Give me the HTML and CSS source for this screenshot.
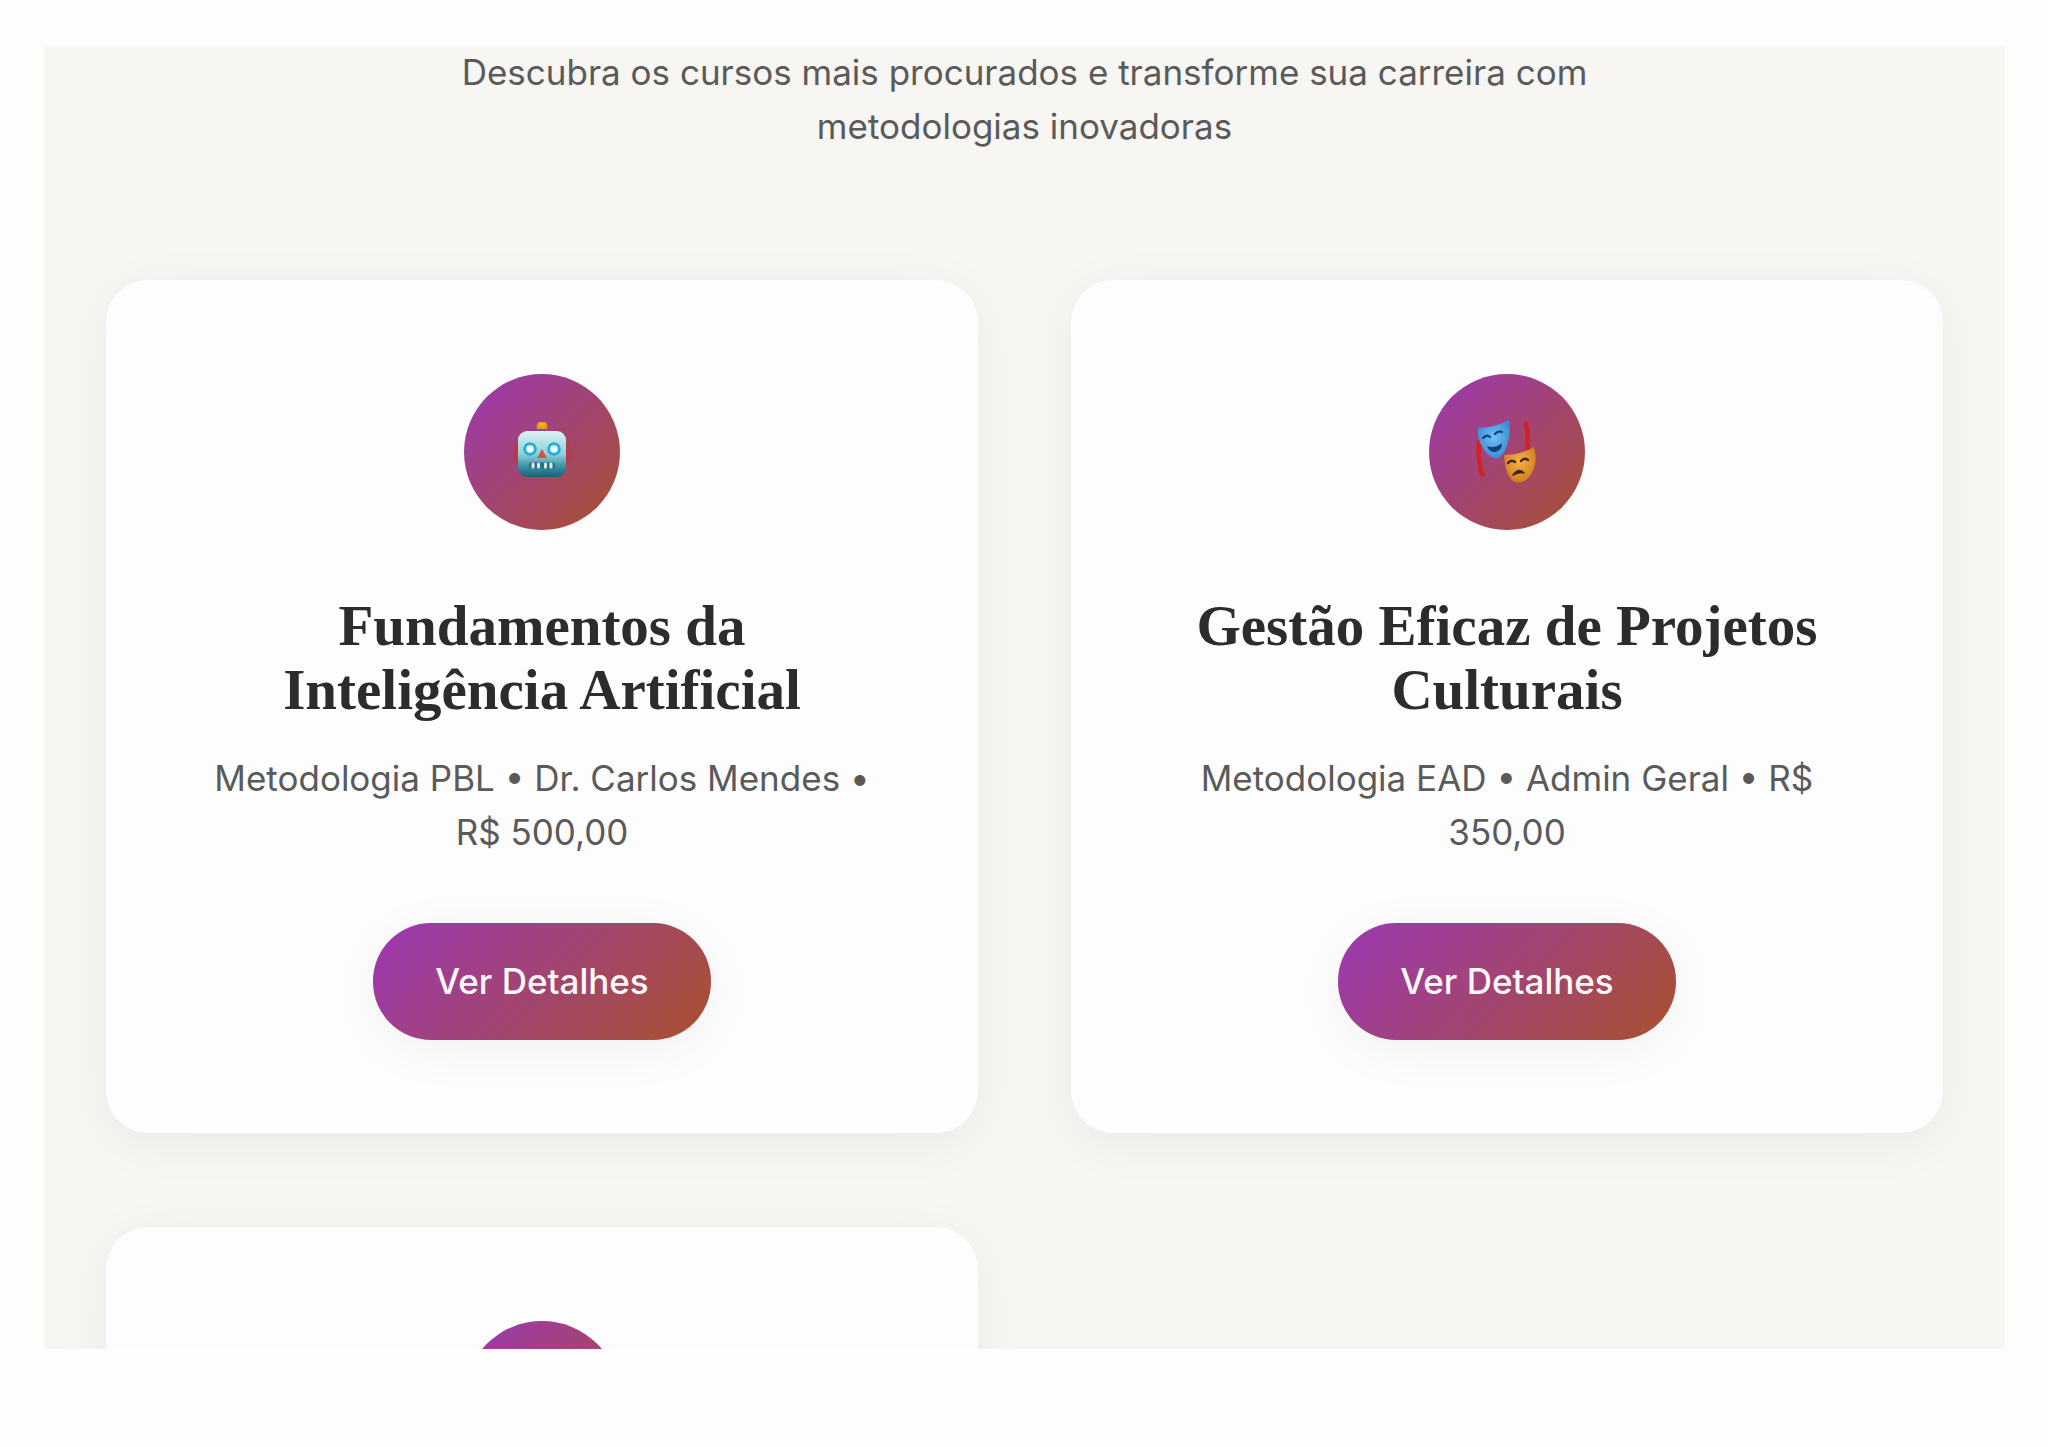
FILE: index.html
```html
<!DOCTYPE html>
<html lang="pt-BR">
<head>
<meta charset="utf-8">
<title>Cursos</title>
<link rel="stylesheet" href="styles.css">
</head>
<body>
<main class="stage">
  <p class="intro">Descubra os cursos mais procurados e transforme sua carreira com<br>metodologias inovadoras</p>
  <section class="grid">
    <article class="card">
      <div class="icon">
        <svg class="emoji" viewBox="0 0 60 60" width="60" height="60" aria-hidden="true">
          <defs>
            <linearGradient id="head" x1="0" y1="0" x2="0" y2="1"><stop offset="0" stop-color="#dcf3f6"/><stop offset=".5" stop-color="#8fd0d8"/><stop offset=".75" stop-color="#3f97a8"/><stop offset="1" stop-color="#1a6076"/></linearGradient>
            <radialGradient id="ball" cx=".5" cy=".35" r=".7"><stop offset="0" stop-color="#fbb92e"/><stop offset="1" stop-color="#e0761c"/></radialGradient>
          </defs>
          <rect x="1.5" y="22" width="7" height="19" rx="3" fill="#b23c4a"/>
          <rect x="51.5" y="22" width="7" height="19" rx="3" fill="#b23c4a"/>
          <circle cx="30" cy="4.500" r="5.500" fill="url(#ball)"/>
          <path d="M26 7h8v3h-8z" fill="#6a5a9c"/>
          <rect x="6" y="9" width="48" height="46" rx="9" fill="url(#head)"/>
          <circle cx="18" cy="27" r="6.800" fill="#22b2d2"/><circle cx="18" cy="27" r="3.800" fill="#f4fdff"/>
          <circle cx="42" cy="27" r="6.800" fill="#22b2d2"/><circle cx="42" cy="27" r="3.800" fill="#f4fdff"/>
          <path d="M30 27l5 9H25z" fill="#d8504e"/>
          <rect x="17" y="40.500" width="26" height="6" rx="2" fill="#2b6f82"/>
          <path d="M21 42v3M26.500 42v3M33.500 42v3M39 42v3" stroke="#dcecef" stroke-width="3" stroke-linecap="round"/>
        </svg>
      </div>
      <h3 class="title">Fundamentos da Inteligência Artificial</h3>
      <p class="desc">Metodologia PBL • Dr. Carlos Mendes • R$ 500,00</p>
      <a class="btn">Ver Detalhes</a>
    </article>
    <article class="card">
      <div class="icon">
        <svg class="emoji" viewBox="0 -3 63 66" width="63" height="66" aria-hidden="true">
          <defs>
            <radialGradient id="blue" cx=".5" cy=".45" r=".7"><stop offset="0" stop-color="#6fc0f2"/><stop offset="1" stop-color="#2f80d0"/></radialGradient>
            <radialGradient id="gold" cx=".5" cy=".4" r=".7"><stop offset="0" stop-color="#f4b545"/><stop offset="1" stop-color="#c9701c"/></radialGradient>
          </defs>
          <path d="M3 20C2 32 3 44 6.500 53" fill="none" stroke="#cf2424" stroke-width="4.500" stroke-linecap="round"/>
          <path d="M50 2c2 8 2.500 15 1.500 24" fill="none" stroke="#cf2424" stroke-width="4.500" stroke-linecap="round"/>
          <path d="M2 6C12 6 24 3 33-2 35 9 33 22 28 30 25 35 22 37 19 36 12 35 6 26 3 18 2 14 2 10 2 6z" fill="url(#blue)"/>
          <path d="M7 16q3.500-4 7-1M19 12q3.500-4 7-2" fill="none" stroke="#123f78" stroke-width="2.200" stroke-linecap="round"/>
          <path d="M11 24q8 3 15-3q0 8-7 9q-6 0-8-6z" fill="#123f78"/>
          <path d="M28 33C38 33 50 30 58 25 61 35 60 46 54 54 50 59 44 62 39 60 33 58 29 48 28 33z" fill="url(#gold)"/>
          <path d="M32 41q3.500-4 7-1M45 39q3.500-4 7-1" fill="none" stroke="#3f240c" stroke-width="2.400" stroke-linecap="round"/>
          <path d="M37 53q6-8 11-2q-5-2-11 2z" fill="#3f240c" stroke="#3f240c" stroke-width="1.600" stroke-linejoin="round"/>
        </svg>
      </div>
      <h3 class="title">Gestão Eficaz de Projetos Culturais</h3>
      <p class="desc">Metodologia EAD • Admin Geral • R$ 350,00</p>
      <a class="btn">Ver Detalhes</a>
    </article>
    <article class="card">
      <div class="icon"></div>
    </article>
  </section>
</main>
</body>
</html>
```

FILE: styles.css
```css
html, body {
  margin: 0;
  padding: 0;
  background: #fefefe;
}

body {
  height: 1447px;
  overflow: hidden;
  font-family: Inter, "Liberation Sans", sans-serif;
}

.stage {
  box-sizing: border-box;
  width: 1961px;
  height: 1303px;
  margin: 46px 0 0 44px;
  padding: 0 62px;
  background: #f7f6f3;
  overflow: hidden;
}

.intro {
  margin: -1px 0 127px;
  font-size: 35px;
  line-height: 54px;
  color: #5a5a5a;
  text-align: center;
}

.grid {
  display: grid;
  grid-template-columns: 872px 872px;
  column-gap: 93px;
  row-gap: 94px;
}

.card {
  box-sizing: border-box;
  height: 853px;
  padding: 94px 94px 0;
  background: #fdfdfd;
  border-radius: 42px;
  box-shadow: 0 10px 52px rgba(0, 0, 0, 0.055);
  display: flex;
  flex-direction: column;
  align-items: center;
  text-align: center;
}

.icon {
  flex: none;
  width: 156px;
  height: 156px;
  border-radius: 50%;
  background: linear-gradient(135deg, #9c38b4, #a8512e);
  display: flex;
  align-items: center;
  justify-content: center;
}

.emoji {
  display: block;
}

.title {
  margin: 64px 0 0;
  font-family: "Liberation Serif", serif;
  font-size: 57px;
  line-height: 64px;
  font-weight: 700;
  color: #2c2c2c;
}

.desc {
  margin: 29px 0 0;
  font-size: 35px;
  line-height: 54px;
  color: #5a5a5a;
}

.btn {
  margin-top: 64px;
  box-sizing: border-box;
  flex: none;
  width: 338px;
  height: 117px;
  padding-bottom: 2px;
  border-radius: 58px;
  background: linear-gradient(135deg, #9c38b4, #a8512e);
  box-shadow: 0 10px 52px rgba(0, 0, 0, 0.05);
  color: #fdf8fb;
  font-size: 35px;
  font-weight: 500;
  display: flex;
  align-items: center;
  justify-content: center;
}
```
